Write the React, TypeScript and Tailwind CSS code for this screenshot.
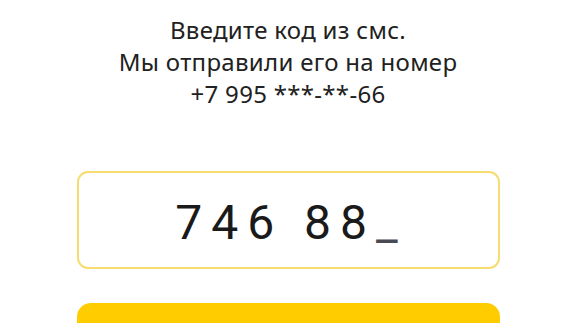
import React from 'react';

const App: React.FC = () => {
  return (
    <div className="w-[576px] h-[323px] overflow-hidden bg-white flex flex-col items-center" style={{ fontFamily: '"Noto Sans", "Open Sans", sans-serif' }}>
      <div className="pt-[14px] shrink-0 text-center text-[24px] leading-[32px] tracking-[0.3px] text-[#212121]">
        <p>Введите код из смс.</p>
        <p>Мы отправили его на номер</p>
        <p>+7 995 ***-**-66</p>
      </div>
      <div className="mt-[61px] shrink-0 w-[423px] h-[98px] pt-[5px] rounded-[11px] border-2 border-[#f7dc6f] flex items-center justify-center">
        <span className="text-[48px] leading-none tracking-[9px] text-[#1a1a1a] font-['Roboto',sans-serif] pl-[6px]">
          746 88<span className="text-[#4a4a55]">_</span>
        </span>
      </div>
      <button className="mt-[34px] shrink-0 w-[423px] h-[60px] rounded-[14px] bg-[#ffcc00]" />
    </div>
  );
};

export default App;
